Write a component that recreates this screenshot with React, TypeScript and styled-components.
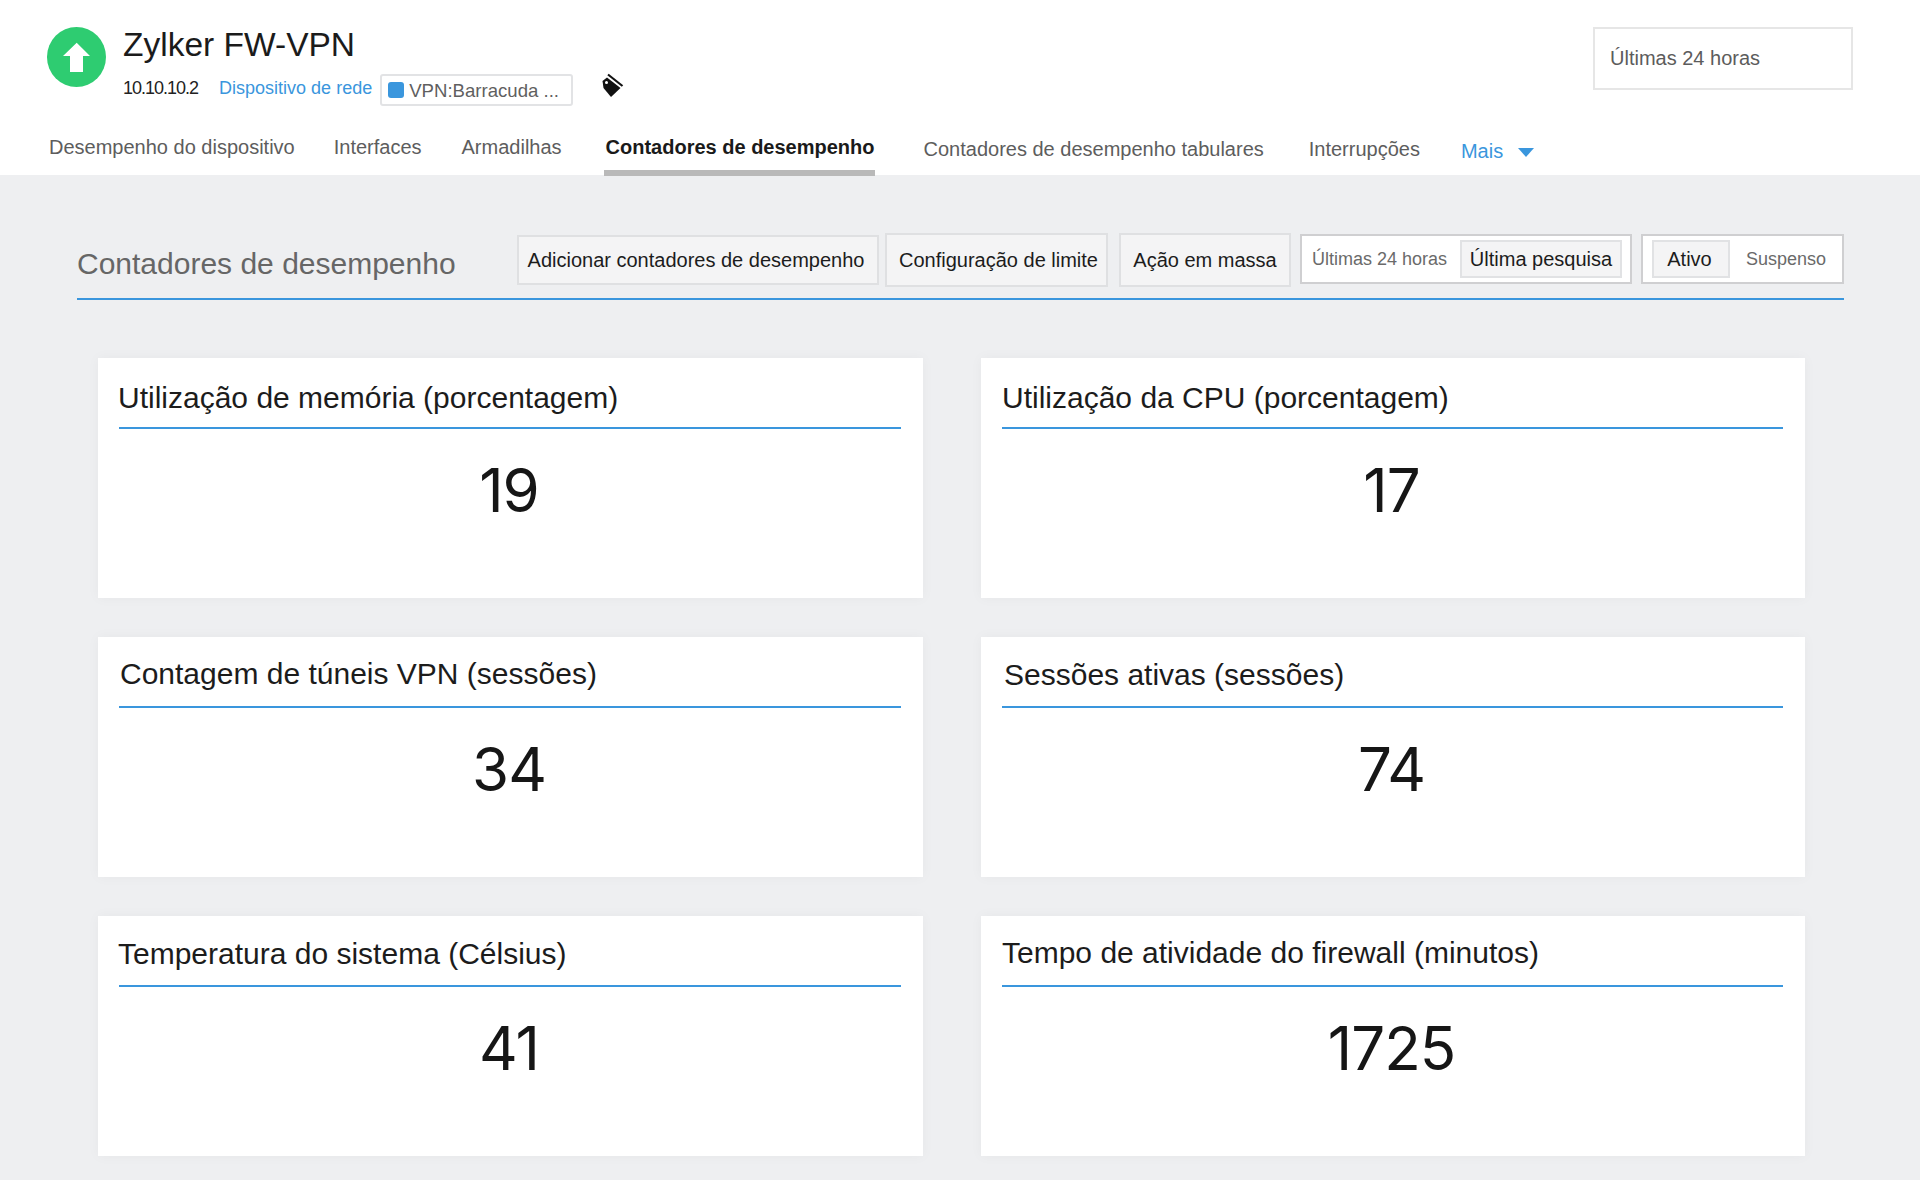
import styled, { createGlobalStyle } from 'styled-components';

const GlobalStyle = createGlobalStyle`
  html, body {
    margin: 0;
    padding: 0;
    background: #eeeff1;
    font-family: "Liberation Sans", Arial, sans-serif;
  }
`;

const Page = styled.div`
  width: 1920px;
  height: 1180px;
  overflow: hidden;
  background: #eeeff1;
`;

const Header = styled.header`
  height: 175px;
  box-sizing: border-box;
  background: #fff;
  padding: 27px 67px 0 47px;
`;

const TopRow = styled.div`
  display: flex;
  align-items: flex-start;
  height: 101px;
`;

const StatusIcon = styled.svg`
  width: 59px;
  height: 60px;
  flex: none;
`;

const DeviceInfo = styled.div`
  margin-left: 17px;
  flex: 1;
`;

const DeviceName = styled.h1`
  margin: -1px 0 0;
  font-size: 33.5px;
  line-height: 38px;
  font-weight: 400;
  color: #1b1b1b;
`;

const MetaRow = styled.div`
  display: flex;
  align-items: center;
  margin-top: 9px;
  font-size: 18px;
`;

const IpText = styled.span`
  margin-bottom: 3px;
  color: #222;
  letter-spacing: -1px;
`;

const TypeLink = styled.a`
  margin-bottom: 3px;
  margin-left: 21px;
  color: #3a96dd;
`;

const TagChip = styled.div`
  display: flex;
  align-items: center;
  width: 193px;
  height: 32px;
  box-sizing: border-box;
  margin-left: 8px;
  padding: 2px 0 0 6px;
  border: 2px solid #e2e3e5;
  border-radius: 3px;
  color: #5f5f5f;
  font-size: 18.6px;
  white-space: nowrap;
`;

const TagDot = styled.i`
  width: 16px;
  height: 16px;
  margin: -2px 5px 0 0;
  border-radius: 3px;
  background: #3a96dd;
`;

const TagIcon = styled.svg`
  width: 24px;
  height: 25px;
  margin: 0 0 8px 28px;
`;

const RangeSelect = styled.div`
  display: flex;
  align-items: center;
  width: 260px;
  height: 63px;
  box-sizing: border-box;
  padding-left: 15px;
  border: 2px solid #e6e6e6;
  font-size: 20px;
  color: #5c5c5c;
`;

const Tabs = styled.nav`
  display: flex;
  height: 48px;
  margin-left: 2px;
`;

const Tab = styled.a<{ $active?: boolean; $gap: number; $drop?: number }>`
  display: flex;
  box-sizing: border-box;
  margin-right: ${({ $gap }) => $gap}px;
  margin-left: ${({ $active }) => ($active ? -2 : 0)}px;
  padding-left: ${({ $active }) => ($active ? 2 : 0)}px;
  padding-top: ${({ $drop }) => 7 + ($drop ?? 0)}px;
  font-size: 20px;
  line-height: 24px;
  white-space: nowrap;
  color: ${({ $active }) => ($active ? '#1a1a1a' : '#5d5d5d')};
  font-weight: ${({ $active }) => ($active ? 700 : 400)};
  border-bottom: ${({ $active }) => ($active ? '6px solid #b9b9b9' : '0')};
`;

const MoreTab = styled(Tab)`
  color: #3a96dd;
  align-items: flex-start;
`;

const Caret = styled.i`
  width: 0;
  height: 0;
  margin: 9px 0 0 15px;
  border-left: 8px solid transparent;
  border-right: 8px solid transparent;
  border-top: 9px solid #3a96dd;
`;

const Section = styled.section`
  margin: 58px 76px 0 77px;
`;

const Toolbar = styled.div`
  display: flex;
  align-items: flex-start;
  height: 65px;
  border-bottom: 2px solid #3a96dd;
`;

const SectionTitle = styled.h2`
  margin: 13px 0 0;
  width: 440px;
  font-size: 30px;
  line-height: 36px;
  font-weight: 400;
  color: #666;
  white-space: nowrap;
`;

const ActionButton = styled.button<{ $w: number; $h: number; $gap: number; $top?: number; $left?: number; $right?: number }>`
  width: ${({ $w }) => $w}px;
  height: ${({ $h }) => $h}px;
  margin-top: ${({ $top }) => $top ?? 0}px;
  margin-right: ${({ $gap }) => $gap}px;
  padding: 0 ${({ $right }) => $right ?? 0}px 0 ${({ $left }) => $left ?? 0}px;
  box-sizing: border-box;
  border: 2px solid #dfe0e2;
  background: #f4f4f5;
  color: #1c1c1c;
  font: 20px "Liberation Sans", Arial, sans-serif;
  white-space: nowrap;
`;

const Toggle = styled.div<{ $w: number; $gap?: number }>`
  display: flex;
  align-items: center;
  justify-content: space-between;
  width: ${({ $w }) => $w}px;
  height: 50px;
  margin-top: 1px;
  margin-right: ${({ $gap }) => $gap ?? 0}px;
  padding: 0 8px 0 9px;
  box-sizing: border-box;
  border: 2px solid #cfcfd1;
  background: #fff;
`;

const ToggleItem = styled.span<{ $on?: boolean; $w: number; $inset?: number }>`
  display: flex;
  align-items: center;
  justify-content: center;
  width: ${({ $w }) => $w}px;
  height: 38px;
  box-sizing: border-box;
  padding: 1px ${({ $inset }) => $inset ?? 0}px 0 0;
  white-space: nowrap;
  border: ${({ $on }) => ($on ? '2px solid #e1e2e4' : '0')};
  background: ${({ $on }) => ($on ? '#f4f4f5' : 'transparent')};
  color: ${({ $on }) => ($on ? '#1c1c1c' : '#6a6a6a')};
  font-size: ${({ $on }) => ($on ? 20 : 18)}px;
`;

const CardGrid = styled.div`
  display: grid;
  grid-template-columns: 825px 824px;
  grid-auto-rows: 240px;
  column-gap: 58px;
  row-gap: 39px;
  margin: 58px 0 0 21px;
`;

const Card = styled.article`
  background: #fff;
  padding: 0 22px 0 21px;
  box-shadow: 0 0 12px rgba(0, 0, 0, 0.04);
`;

const CardTitle = styled.div<{ $dx: number; $top: number }>`
  height: 71px;
  box-sizing: border-box;
  padding-top: ${({ $top }) => $top}px;
  text-indent: ${({ $dx }) => $dx}px;
  border-bottom: 2px solid #3a96dd;
  font-size: 30px;
  line-height: 34px;
  color: #1c1c1c;
  white-space: nowrap;
`;

const CardValue = styled.div`
  margin-top: 26px;
  padding-right: 2px;
  text-align: center;
  font-size: 60px;
  line-height: 70px;
  color: #161616;
  font-family: "Inter", "Liberation Sans", sans-serif;
  letter-spacing: -1px;
`;

const counters = [
  { title: 'Utilização de memória (porcentagem)', value: 19, dx: -1, top: 23 },
  { title: 'Utilização da CPU (porcentagem)', value: 17, dx: 0, top: 23 },
  { title: 'Contagem de túneis VPN (sessões)', value: 34, dx: 1, top: 20 },
  { title: 'Sessões ativas (sessões)', value: 74, dx: 2, top: 21 },
  { title: 'Temperatura do sistema (Célsius)', value: 41, dx: -1, top: 21 },
  { title: 'Tempo de atividade do firewall (minutos)', value: 1725, dx: 0, top: 20 },
];

export default function App() {
  return (
    <Page>
      <GlobalStyle />
      <Header>
        <TopRow>
          <StatusIcon viewBox="0 0 59 60">
            <ellipse cx="29.5" cy="30" rx="29.5" ry="30" fill="#2ecc71" />
            <path d="M29.7 15.7 L43 29 H36 V45 H23 V29 H16 Z" fill="#fff" />
          </StatusIcon>
          <DeviceInfo>
            <DeviceName>Zylker FW-VPN</DeviceName>
            <MetaRow>
              <IpText>10.10.10.2</IpText>
              <TypeLink>Dispositivo de rede</TypeLink>
              <TagChip>
                <TagDot />
                VPN:Barracuda ...
              </TagChip>
              <TagIcon viewBox="0 0 24 25">
                <path d="M1.5 8 L6 4.5 L19.5 15 L10 24 L2.5 15 Z" fill="#111" />
                <path d="M7 1.5 L21.5 13" stroke="#111" strokeWidth="2.2" fill="none" />
                <circle cx="5.5" cy="9.5" r="1.5" fill="#fff" />
              </TagIcon>
            </MetaRow>
          </DeviceInfo>
          <RangeSelect>Últimas 24 horas</RangeSelect>
        </TopRow>
        <Tabs>
          <Tab $gap={39}>Desempenho do dispositivo</Tab>
          <Tab $gap={40}>Interfaces</Tab>
          <Tab $gap={44}>Armadilhas</Tab>
          <Tab $active $gap={49}>Contadores de desempenho</Tab>
          <Tab $gap={45} $drop={2}>Contadores de desempenho tabulares</Tab>
          <Tab $gap={41} $drop={2}>Interrupções</Tab>
          <MoreTab $gap={0} $drop={4}>
            Mais
            <Caret />
          </MoreTab>
        </Tabs>
      </Header>
      <Section>
        <Toolbar>
          <SectionTitle>Contadores de desempenho</SectionTitle>
          <ActionButton $w={362} $h={50} $gap={6} $top={2} $right={4}>Adicionar contadores de desempenho</ActionButton>
          <ActionButton $w={223} $h={54} $gap={11} $left={4}>Configuração de limite</ActionButton>
          <ActionButton $w={172} $h={54} $gap={9}>Ação em massa</ActionButton>
          <Toggle $w={332} $gap={9}>
            <ToggleItem $w={137}>Últimas 24 horas</ToggleItem>
            <ToggleItem $on $w={162}>Última pesquisa</ToggleItem>
          </Toggle>
          <Toggle $w={203}>
            <ToggleItem $on $w={78} $inset={3}>Ativo</ToggleItem>
            <ToggleItem $w={96}>Suspenso</ToggleItem>
          </Toggle>
        </Toolbar>
        <CardGrid>
          {counters.map((c) => (
            <Card key={c.title}>
              <CardTitle $dx={c.dx} $top={c.top}>{c.title}</CardTitle>
              <CardValue>{c.value}</CardValue>
            </Card>
          ))}
        </CardGrid>
      </Section>
    </Page>
  );
}
